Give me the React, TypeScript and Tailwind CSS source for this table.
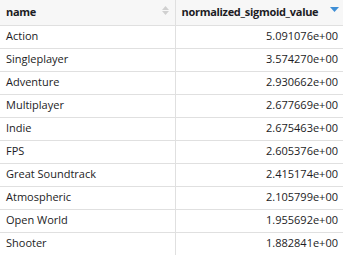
const ROWS: [string, string][] = [
  ['Action', '5.091076e+00'],
  ['Singleplayer', '3.574270e+00'],
  ['Adventure', '2.930662e+00'],
  ['Multiplayer', '2.677669e+00'],
  ['Indie', '2.675463e+00'],
  ['FPS', '2.605376e+00'],
  ['Great Soundtrack', '2.415174e+00'],
  ['Atmospheric', '2.105799e+00'],
  ['Open World', '1.955692e+00'],
  ['Shooter', '1.882841e+00'],
]

export default function App() {
  return (
    <div className="w-[343px] h-[255px] overflow-hidden bg-white text-[11px] text-[#1c1c24] font-['Open_Sans',sans-serif]">
      <table className="w-full border-collapse table-fixed">
        <colgroup>
          <col className="w-[175px]" />
          <col />
        </colgroup>
        <thead>
          <tr className="h-[25px] bg-[#f7f7f7] border-b border-[#e0e0e0]">
            <th className="relative text-left font-bold pl-[6px] tracking-[-0.3px] border-r border-[#e0e0e0]">
              name
              {/* unsorted indicator */}
              <span className="absolute right-[6px] top-[6px] flex flex-col gap-[1px]">
                <svg width="7" height="4" viewBox="0 0 7 4"><path d="M0 4L3.5 0L7 4Z" fill="#d0d0d0" /></svg>
                <svg width="7" height="4" viewBox="0 0 7 4"><path d="M0 0L3.5 4L7 0Z" fill="#d0d0d0" /></svg>
              </span>
            </th>
            <th className="relative text-left font-bold pl-[6px] tracking-[-0.3px]">
              normalized_sigmoid_value
              <span className="absolute right-[4px] top-[7px]">
                <svg width="9" height="5" viewBox="0 0 9 5"><path d="M0 0L4.5 5L9 0Z" fill="#3f8fd6" /></svg>
              </span>
            </th>
          </tr>
        </thead>
        <tbody>
          {ROWS.map(([name, value]) => (
            <tr key={name} className="h-[23px] border-b border-[#e0e0e0]">
              <td className="pl-[6px] border-r border-[#e0e0e0]">{name}</td>
              <td className="pr-[5px] text-right">{value}</td>
            </tr>
          ))}
        </tbody>
      </table>
    </div>
  )
}
